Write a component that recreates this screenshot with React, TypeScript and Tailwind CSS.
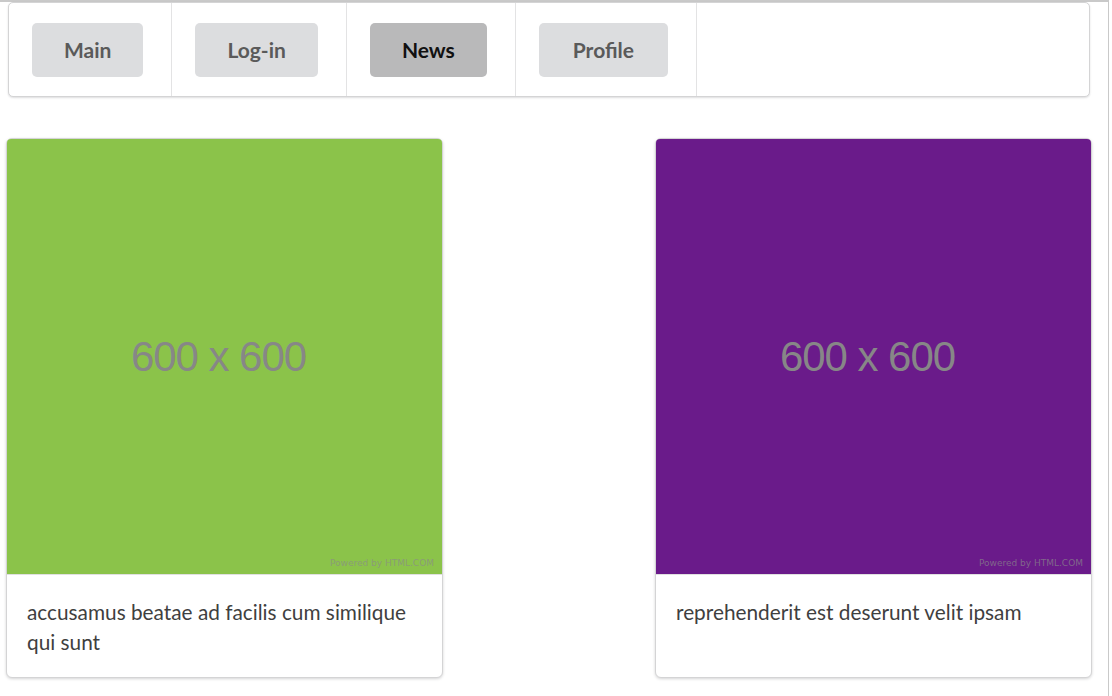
import React from "react";

const navItems = [
  { label: "Main", active: false },
  { label: "Log-in", active: false },
  { label: "News", active: true },
  { label: "Profile", active: false },
];

const posts = [
  {
    color: "bg-[#8bc34a]",
    text: "accusamus beatae ad facilis cum similique qui sunt",
  },
  {
    color: "bg-[#6a1b8a]",
    text: "reprehenderit est deserunt velit ipsam",
  },
];

function Placeholder({ color }: { color: string }) {
  return (
    <div className={`relative h-[435px] w-full ${color} flex items-center justify-center rounded-t-[4px] pr-[12px]`}>
      <span className="font-['Liberation_Sans',Arial,sans-serif] text-[42px] text-[#878787] tracking-tight">
        600 x 600
      </span>
      <span className="absolute bottom-[4px] right-[8px] font-['DejaVu_Sans',sans-serif] text-[9px] text-[#8a8a8a]/70">
        Powered by HTML.COM
      </span>
    </div>
  );
}

export default function App() {
  return (
    <div className="min-h-[696px] w-[1109px] border-t-2 border-r border-[#c9c9c9] bg-white font-['Lato','Noto_Sans',sans-serif]">
      <div className="mx-[8px] flex h-[95px] w-[1082px] rounded-[5px] border border-[#d4d4d5] bg-white shadow-[0_1px_2px_0_rgba(34,36,38,0.15)]">
        {navItems.map((item) => (
          <div
            key={item.label}
            className="flex items-center border-r border-[#e3e3e4] pl-[23px] pr-[28px]"
          >
            <button
              className={`h-[54px] rounded-[5px] px-[32px] text-[21px] font-bold ${
                item.active
                  ? "bg-[#b9b9ba] text-[#111]"
                  : "bg-[#dcdddf] text-[#5a5a5a]"
              } ${item.label === "Profile" ? "px-[34px]" : ""}`}
            >
              {item.label}
            </button>
          </div>
        ))}
      </div>

      <div className="mt-[41px] flex justify-between pl-[6px] pr-[16px]">
        {posts.map((p) => (
          <div
            key={p.text}
            className="flex h-[540px] w-[437px] flex-col rounded-[6px] border border-[#d4d4d5] bg-white shadow-[0_1px_3px_0_#d4d4d5]"
          >
            <Placeholder color={p.color} />
            <div className="flex-1 border-t border-[#e0e0e0] px-[20px] pt-[22px] text-[20.8px] leading-[30px] text-[#3f3f3f]">
              {p.text}
            </div>
          </div>
        ))}
      </div>
    </div>
  );
}
